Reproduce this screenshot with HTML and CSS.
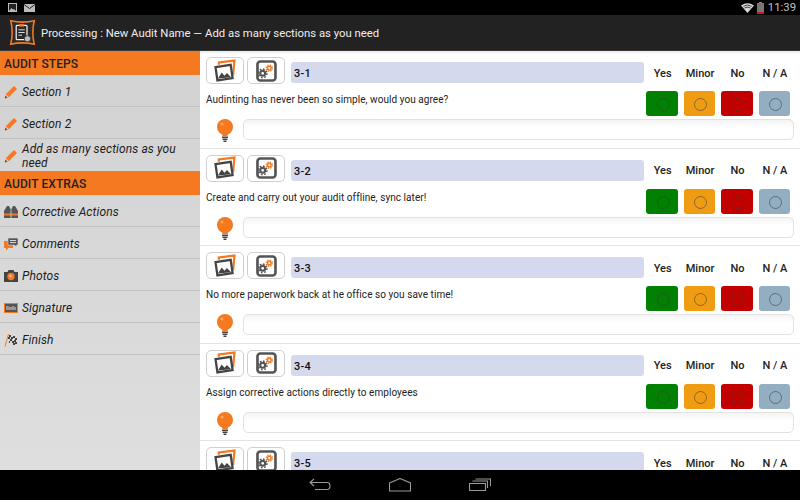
FILE: index.html
```html
<!DOCTYPE html>
<html lang="en">
<head>
<meta charset="utf-8">
<title>Audit</title>
<link rel="stylesheet" href="styles.css">
</head>
<body>
<svg class="defs" width="0" height="0" aria-hidden="true">
  <symbol id="i-pencil" viewBox="0 0 14 14">
    <path d="M10 1l3 3-8.200 8.200-3-3z" fill="#f47920"/>
    <path d="M1.500 10.500l2.200 2.200-3 .8z" fill="#555"/>
  </symbol>
  <symbol id="i-photo" viewBox="0 0 38 28">
    <path d="M12.500 7.500V5L29 3l-1.500 15.500" fill="none" stroke="#f47920" stroke-width="2.400"/>
    <path d="M9 10l16-2.500 2 14L11 24z" fill="#fff" stroke="#444" stroke-width="2.400"/>
    <path d="M11.500 22l4-6.500 3 3.500 2.500-3 4.500 4.500z" fill="#444"/>
  </symbol>
  <symbol id="i-gear" viewBox="0 0 38 28">
    <rect x="10" y="4" width="19" height="20" rx="3" fill="#fff" stroke="#555" stroke-width="2.800"/>
    <circle cx="15.500" cy="16.500" r="2.600" fill="none" stroke="#555" stroke-width="2.200"/>
    <circle cx="15.500" cy="16.500" r="4.500" fill="none" stroke="#555" stroke-width="1.600" stroke-dasharray="1.800 1.700"/>
    <circle cx="22.500" cy="11" r="1.900" fill="none" stroke="#f47920" stroke-width="1.600"/>
    <circle cx="22.500" cy="11" r="3.300" fill="none" stroke="#f47920" stroke-width="1.300" stroke-dasharray="1.400 1.200"/>
  </symbol>
  <symbol id="i-bulb" viewBox="0 0 16 23">
    <circle cx="8" cy="8" r="8" fill="#f47920"/>
    <path d="M4.500 13h7l-1 4h-5z" fill="#f47920"/>
    <circle cx="5" cy="5" r="1.500" fill="#f9a868"/>
    <path d="M5 17.500h6V19H5zM5.500 19.500h5V21h-5zM6.500 21.500h3V23h-3z" fill="#444"/>
  </symbol>
</svg>

<div class="app">
  <header class="status">
    <div class="status-left">
      <svg class="st-icon" width="9" height="9" viewBox="0 0 9 9"><rect x=".5" y=".5" width="8" height="8" fill="#222" stroke="#bbb"/><path d="M1 8l2.500-3 1.500 1.500L6 6l2 2z" fill="#bbb"/></svg>
      <svg class="st-icon" width="11" height="8" viewBox="0 0 11 8"><rect width="11" height="8" fill="#bbb"/><path d="M0 .5l5.500 4 5.500-4" fill="none" stroke="#222"/></svg>
    </div>
    <div class="status-right">
      <svg width="13" height="10" viewBox="0 0 13 10"><path d="M0 2.500Q6.500-2 13 2.500L6.500 10z" fill="#d8d8d8"/><path d="M2.400 3.300Q6.500.8 10.600 3.300M3.600 5Q6.500 3.200 9.400 5" fill="none" stroke="#000" stroke-width=".7"/></svg>
      <svg width="7" height="12" viewBox="0 0 7 12"><rect x="2" width="3" height="1" fill="#888"/><rect y="1" width="7" height="11" fill="#777"/><rect y="10" width="7" height="2" fill="#c81c1c"/></svg>
      <span class="clock">11:39</span>
    </div>
  </header>

  <div class="actionbar">
    <svg class="logo" width="27" height="27" viewBox="0 0 30 30">
      <path d="M2 2Q15 5 28 2 25 15 28 28 15 25 2 28 5 15 2 2z" fill="#2a2a2a" stroke="#f47920" stroke-width="1.800"/>
      <rect x="8" y="7" width="12" height="16" rx="1" fill="none" stroke="#eee" stroke-width="1.400"/>
      <rect x="11.500" y="5.500" width="5" height="3" fill="#f47920"/>
      <path d="M10.500 12h7M10.500 15h7M10.500 18h4" stroke="#eee"/>
      <circle cx="20.500" cy="22" r="3.500" fill="#bbb" stroke="#333"/>
    </svg>
    <span class="app-title">Processing : New Audit Name — Add as many sections as you need</span>
  </div>

  <div class="content">
    <nav class="sidebar">
      <h2 class="side-head">AUDIT STEPS</h2>
      <a class="side-item"><svg class="side-icon" width="14" height="14"><use href="#i-pencil"/></svg><span>Section 1</span></a>
      <a class="side-item"><svg class="side-icon" width="14" height="14"><use href="#i-pencil"/></svg><span>Section 2</span></a>
      <a class="side-item side-item-tall"><svg class="side-icon" width="14" height="14"><use href="#i-pencil"/></svg><span>Add as many sections as you need</span></a>
      <h2 class="side-head">AUDIT EXTRAS</h2>
      <a class="side-item"><svg class="side-icon" width="14" height="14" viewBox="0 0 14 14"><path d="M0 6l3-5h2l2 4 2-4h2l3 5v7H0z" fill="#555"/><path d="M0 8.500h14v2H0z" fill="#f47920"/><path d="M6.600 5h.8v8h-.8z" fill="#d4d4d4"/></svg><span>Corrective Actions</span></a>
      <a class="side-item"><svg class="side-icon" width="14" height="14" viewBox="0 0 14 14"><path d="M0 4h9v7H4.500L2 13.500V11H0z" fill="#f47920"/><path d="M4 1h10v7h-1.500v2L10.500 8H4z" fill="#555" stroke="#d4d4d4" stroke-width=".6"/><path d="M6 3.500h6M6 5.500h6" stroke="#d4d4d4"/></svg><span>Comments</span></a>
      <a class="side-item"><svg class="side-icon" width="14" height="14" viewBox="0 0 14 14"><path d="M0 3h3.500l1-2h5l1 2H14v10H0z" fill="#444"/><circle cx="7" cy="7.500" r="3.700" fill="#f47920"/><circle cx="6.500" cy="7" r="1.200" fill="#fbc8a0"/></svg><span>Photos</span></a>
      <a class="side-item"><svg class="side-icon" width="14" height="14" viewBox="0 0 14 14"><rect x=".5" y="2.500" width="13" height="9" fill="#555" stroke="#f47920"/><path d="M3 9V5M5 9V5.500M7 9V6M9 9V5M11 9V6" stroke="#ddd"/></svg><span>Signature</span></a>
      <a class="side-item"><svg class="side-icon" width="14" height="14" viewBox="0 0 14 14"><path d="M1 13.500L4.500 1" stroke="#f47920" stroke-width="1"/><path d="M5 2h2v2H5zM9 3h2v2H9zM7 4h2v2H7zM11 5h2v2h-2zM4 4h2v2H4zM6 6h2v2H6zM10 7h2v2h-2zM8 8h2v2H8zM5 8h1v2H5zM11 9h2v2h-2zM9 10h2v2H9z" fill="#444"/></svg><span>Finish</span></a>
    </nav>

    <main class="audit">
      <section class="question">
        <div class="q-top">
          <button class="tool"><svg width="38" height="28"><use href="#i-photo"/></svg></button>
          <button class="tool"><svg width="38" height="28"><use href="#i-gear"/></svg></button>
          <div class="q-title">3-1</div>
          <div class="q-labels"><span>Yes</span><span>Minor</span><span>No</span><span>N / A</span></div>
        </div>
        <div class="q-mid">
          <p class="q-text">Audinting has never been so simple, would you agree?</p>
          <div class="q-choices"><span class="choice yes"></span><span class="choice minor"></span><span class="choice no"></span><span class="choice na"></span></div>
        </div>
        <div class="q-note"><svg class="bulb" width="16" height="23"><use href="#i-bulb"/></svg><div class="note-field"></div></div>
      </section>
      <section class="question">
        <div class="q-top">
          <button class="tool"><svg width="38" height="28"><use href="#i-photo"/></svg></button>
          <button class="tool"><svg width="38" height="28"><use href="#i-gear"/></svg></button>
          <div class="q-title">3-2</div>
          <div class="q-labels"><span>Yes</span><span>Minor</span><span>No</span><span>N / A</span></div>
        </div>
        <div class="q-mid">
          <p class="q-text">Create and carry out your audit offline, sync later!</p>
          <div class="q-choices"><span class="choice yes"></span><span class="choice minor"></span><span class="choice no"></span><span class="choice na"></span></div>
        </div>
        <div class="q-note"><svg class="bulb" width="16" height="23"><use href="#i-bulb"/></svg><div class="note-field"></div></div>
      </section>
      <section class="question">
        <div class="q-top">
          <button class="tool"><svg width="38" height="28"><use href="#i-photo"/></svg></button>
          <button class="tool"><svg width="38" height="28"><use href="#i-gear"/></svg></button>
          <div class="q-title">3-3</div>
          <div class="q-labels"><span>Yes</span><span>Minor</span><span>No</span><span>N / A</span></div>
        </div>
        <div class="q-mid">
          <p class="q-text">No more paperwork back at he office so you save time!</p>
          <div class="q-choices"><span class="choice yes"></span><span class="choice minor"></span><span class="choice no"></span><span class="choice na"></span></div>
        </div>
        <div class="q-note"><svg class="bulb" width="16" height="23"><use href="#i-bulb"/></svg><div class="note-field"></div></div>
      </section>
      <section class="question">
        <div class="q-top">
          <button class="tool"><svg width="38" height="28"><use href="#i-photo"/></svg></button>
          <button class="tool"><svg width="38" height="28"><use href="#i-gear"/></svg></button>
          <div class="q-title">3-4</div>
          <div class="q-labels"><span>Yes</span><span>Minor</span><span>No</span><span>N / A</span></div>
        </div>
        <div class="q-mid">
          <p class="q-text">Assign corrective actions directly to employees</p>
          <div class="q-choices"><span class="choice yes"></span><span class="choice minor"></span><span class="choice no"></span><span class="choice na"></span></div>
        </div>
        <div class="q-note"><svg class="bulb" width="16" height="23"><use href="#i-bulb"/></svg><div class="note-field"></div></div>
      </section>
      <section class="question">
        <div class="q-top">
          <button class="tool"><svg width="38" height="28"><use href="#i-photo"/></svg></button>
          <button class="tool"><svg width="38" height="28"><use href="#i-gear"/></svg></button>
          <div class="q-title">3-5</div>
          <div class="q-labels"><span>Yes</span><span>Minor</span><span>No</span><span>N / A</span></div>
        </div>
      </section>
    </main>
  </div>

  <footer class="navbar">
    <svg width="22" height="14" viewBox="0 0 22 14"><path d="M5 1L1 4.500 5 8M1 4.500h17q3 0 3 3.500t-3 3.500H6" fill="none" stroke="#9a9a9a" stroke-width="1.100"/></svg>
    <svg width="22" height="14" viewBox="0 0 22 14"><path d="M.5 5L11 .5 21.500 5v8H.5z" fill="none" stroke="#9a9a9a" stroke-width="1.100"/></svg>
    <svg width="22" height="14" viewBox="0 0 22 14"><path d="M.5 5.500h16v7H.5zM3.500 3h15v7M6.500 1h15v7" fill="none" stroke="#9a9a9a" stroke-width="1.100"/></svg>
  </footer>
</div>
</body>
</html>
```

FILE: styles.css
```css
* { box-sizing: border-box; }
html, body { margin: 0; height: 100%; overflow: hidden; }
body { font-family: Roboto, "Liberation Sans", sans-serif; color: #222; background: #fff; }
.defs { position: absolute; }

.app { display: flex; flex-direction: column; width: 800px; height: 500px; }

.status { flex: 0 0 15px; background: #000; display: flex; justify-content: space-between; align-items: center; padding: 0 4px 0 8px; }
.status-left { display: flex; align-items: center; gap: 7px; }
.status-right { display: flex; align-items: center; gap: 3px; }
.st-icon { display: block; }
.clock { color: #c0c0c0; font-size: 11.300px; line-height: 15px; margin-left: 1px; }

.actionbar { flex: 0 0 36px; background: #222; border-bottom: 1px solid #3a3a3a; display: flex; align-items: center; padding: 0 0 0 9px; gap: 5px; }
.logo { flex: none; }
.app-title { color: #eee; font-size: 11.330px; white-space: nowrap; }

.content { flex: 1; display: flex; min-height: 0; }

.sidebar { flex: 0 0 200px; background: linear-gradient(#d2d2d2, #dedede); }
.side-head { margin: 0; height: 24px; background: #f47920; color: #222; font-size: 12px; font-weight: 500; line-height: 26px; padding-left: 4px; letter-spacing: .1px; }
.side-item { display: flex; align-items: center; height: 32px; border-bottom: 1px solid #c2c2c2; padding: 2px 0 0 4px; color: #1c1c1c; font-size: 12px; font-style: italic; gap: 4px; letter-spacing: .1px; }
.side-item-tall { line-height: 14px; border-bottom: 0; padding-top: 1px; }
.side-icon { flex: none; }

.audit { flex: 1; min-width: 0; overflow: hidden; box-shadow: inset 0 4px 3px -3px #ddd; }
.question { height: 97.600px; border-bottom: 1px solid #e4e4e4; padding: 6px 6px 0; }
.q-top { display: flex; height: 27px; gap: 3px; }
.tool { flex: none; width: 38px; height: 27px; padding: 0; background: #fff; border: 1px solid #cfcfcf; border-radius: 5px; display: flex; align-items: center; justify-content: center; overflow: hidden; }
.q-title { flex: none; width: 353px; height: 21px; margin: 5px -3px 0 3px; background: #d4d9ee; border-radius: 3px; font-size: 11px; font-weight: 500; line-height: 23px; padding-left: 3px; letter-spacing: .3px; color: #111; }
.q-labels { flex: none; display: grid; grid-template-columns: repeat(4, 37.400px); margin-top: 9.500px; font-size: 11px; line-height: 14px; font-weight: 500; text-align: center; color: #222; }
.q-mid { display: flex; justify-content: space-between; align-items: center; height: 34px; }
.q-text { margin: 0 0 3px; font-size: 10px; color: #222; letter-spacing: .06px; }
.q-choices { display: flex; gap: 6px; padding-right: 4px; margin-top: 5px; }
.choice { position: relative; width: 31.400px; height: 25px; border-radius: 3px; }
.choice::after { content: ""; position: absolute; left: 50%; top: 50%; width: 11px; height: 11px; margin: -5.500px 0 0 -5.500px; border: 1px solid rgba(60,60,60,.55); border-radius: 50%; }
.yes { background: #028002; }
.minor { background: #f09c12; }
.no { background: #c20000; }
.na { background: #92aec0; }
.q-note { display: flex; align-items: flex-start; height: 22px; padding: 1px 0 0 11px; gap: 10px; }
.bulb { flex: none; }
.note-field { flex: 1; height: 21px; border: 1px solid #e2e2e2; border-radius: 5px; background: linear-gradient(#f4f4f4, #fff 40%); }

.navbar { flex: 0 0 30px; background: #000; display: flex; align-items: center; justify-content: center; gap: 58px; position: relative; z-index: 1; }
```
